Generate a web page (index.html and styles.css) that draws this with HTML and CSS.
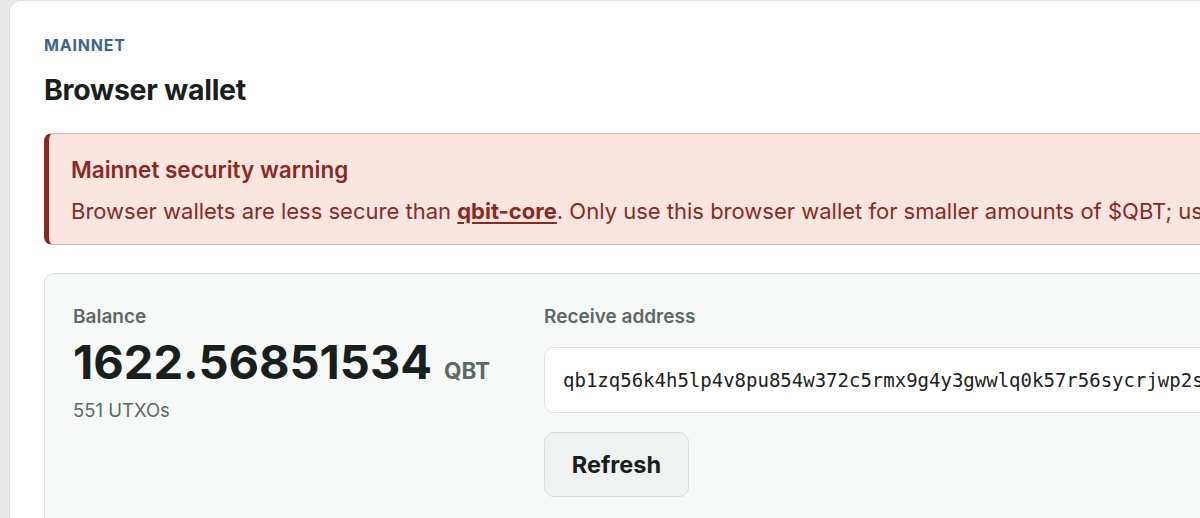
FILE: index.html
```html
<!DOCTYPE html>
<html lang="en">
<head>
<meta charset="utf-8">
<title>Browser wallet</title>
<link rel="stylesheet" href="styles.css">
</head>
<body>
<div class="page">
  <main class="panel">
    <div class="eyebrow">MAINNET</div>
    <h1 class="title">Browser wallet</h1>

    <section class="alert">
      <div class="alert-title">Mainnet security warning</div>
      <p class="alert-body">Browser wallets are less secure than <a href="#" class="alert-link">qbit-core</a>. Only use this browser wallet for smaller amounts of $QBT; use qbit-core for larger holdings.</p>
    </section>

    <section class="wallet">
      <div class="col">
        <div class="label">Balance</div>
        <div class="balance-row">
          <span class="balance">1622.56851534</span>
          <span class="unit">QBT</span>
        </div>
        <div class="meta">551 UTXOs</div>
      </div>
      <div class="col">
        <div class="label">Receive address</div>
        <div class="address">qb1zq56k4h5lp4v8pu854w372c5rmx9g4y3gwwlq0k57r56sycrjwp2sxl3k9qv7</div>
        <button class="btn" type="button">Refresh</button>
      </div>
    </section>
  </main>
</div>
</body>
</html>
```

FILE: styles.css
```css
* { box-sizing: border-box; }

html, body {
  margin: 0;
  padding: 0;
  overflow: hidden;
}

body {
  background: #e7eae8;
  font-family: Inter, "Noto Sans", "Liberation Sans", sans-serif;
  color: #1b2320;
}

.page {
  display: flex;
  padding-left: 9px;
  width: 1700px;
  height: 518px;
}

.panel {
  width: 1600px;
  background: #ffffff;
  border: 1px solid #dbe0dd;
  border-bottom: none;
  border-radius: 12px 12px 0 0;
  padding: 34px 34px 0;
}

.eyebrow {
  font-size: 16px;
  line-height: 20px;
  font-weight: 700;
  letter-spacing: 0.05em;
  color: #3c6590;
}

.title {
  margin: 18px 0 0;
  font-size: 28.5px;
  line-height: 34px;
  font-weight: 700;
  letter-spacing: -0.01em;
  color: #19201d;
}

.alert {
  margin-top: 26px;
  background: #fbe5e1;
  border: 1px solid #e2aca5;
  border-left: 5px solid #8a2a1f;
  border-radius: 8px;
  padding: 22px 22px 19px;
  color: #8a2a1f;
}

.alert-title {
  font-size: 22.5px;
  line-height: 28px;
  font-weight: 600;
}

.alert-body {
  margin: 13px 0 0;
  font-size: 22px;
  line-height: 28px;
  white-space: nowrap;
}

.alert-link {
  color: #8a2a1f;
  font-weight: 700;
  text-decoration: underline;
  text-underline-offset: 3px;
}

.wallet {
  margin-top: 28px;
  background: #f7f9f8;
  border: 1px solid #dce2df;
  border-radius: 10px;
  padding: 31px 28px 40px;
  display: grid;
  grid-template-columns: 441px 1fr;
  column-gap: 30px;
}

.col {
  display: flex;
  flex-direction: column;
  align-items: flex-start;
  min-width: 0;
}

.label {
  font-size: 19px;
  line-height: 23px;
  font-weight: 600;
  color: #5d6964;
}

.balance-row {
  margin-top: 8px;
  display: flex;
  align-items: baseline;
  gap: 12px;
}

.balance {
  font-size: 47px;
  line-height: 52px;
  font-weight: 700;
  color: #18201d;
}

.unit {
  font-size: 22.5px;
  font-weight: 700;
  color: #5d6964;
}

.meta {
  margin-top: 11px;
  font-size: 18.5px;
  line-height: 22px;
  color: #5d6964;
}

.address {
  margin-top: 19px;
  width: 100%;
  height: 66px;
  display: flex;
  align-items: center;
  padding: 0 18px;
  background: #ffffff;
  border: 1px solid #dde2df;
  border-radius: 10px;
  font-family: "DejaVu Sans Mono", "Liberation Mono", monospace;
  font-size: 19px;
  color: #1b2320;
  white-space: nowrap;
  overflow: hidden;
}

.btn {
  margin-top: 19px;
  width: 145px;
  height: 65px;
  background: #eef2f0;
  border: 1px solid #d6dcd9;
  border-radius: 10px;
  font-family: Inter, "Noto Sans", "Liberation Sans", sans-serif;
  font-size: 23.5px;
  font-weight: 700;
  color: #18201d;
  cursor: pointer;
}
```
